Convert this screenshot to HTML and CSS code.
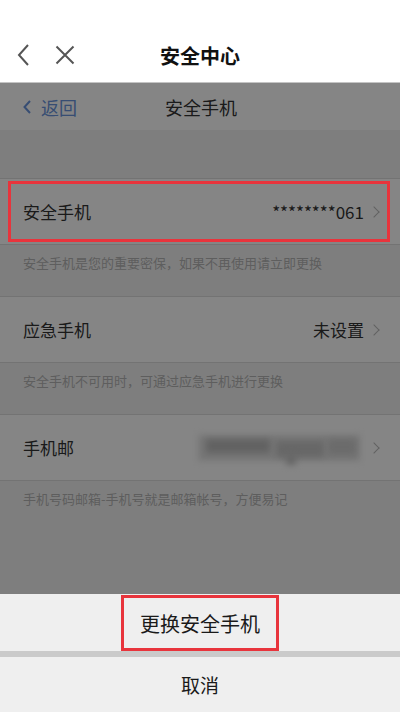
FILE: index.html
```html
<!DOCTYPE html>
<html>
<head>
  <meta charset="utf-8">
  <link rel="stylesheet" href="styles.css">
</head>
<body>
  <div class="app">
    <!-- Top app bar -->
    <div class="app-bar">
      <div class="app-bar-icons">
        <svg class="icon-back" width="16" height="24" viewBox="0 0 16 24">
          <path d="M12 2 L3 12 L12 22" fill="none" stroke="#555" stroke-width="2"/>
        </svg>
        <svg class="icon-close" width="20" height="20" viewBox="0 0 20 20">
          <path d="M1.5 1.5 L18.5 18.5 M18.5 1.5 L1.5 18.5" fill="none" stroke="#555" stroke-width="2"/>
        </svg>
      </div>
      <div class="app-bar-title">安全中心</div>
    </div>

    <!-- Web page, dimmed by the sheet -->
    <div class="webview">
      <div class="page-nav">
        <span class="nav-back">
          <svg width="8" height="14" viewBox="0 0 8 14">
            <path d="M7 1 L1.5 7 L7 13" fill="none" stroke="#6a95dc" stroke-width="2"/>
          </svg>
          返回
        </span>
        <span class="nav-title">安全手机</span>
      </div>

      <div class="settings">
        <div class="row row-marked">
          <span class="row-label">安全手机</span>
          <span class="row-value">********061<i class="chevron"></i></span>
        </div>
        <div class="hint">安全手机是您的重要密保，如果不再使用请立即更换</div>

        <div class="row">
          <span class="row-label">应急手机</span>
          <span class="row-value">未设置<i class="chevron"></i></span>
        </div>
        <div class="hint">安全手机不可用时，可通过应急手机进行更换</div>

        <div class="row">
          <span class="row-label">手机邮</span>
          <span class="row-value">
            <span class="blurred">
              <b class="b1"></b><b class="b2"></b><b class="b3"></b><b class="b4"></b><b class="b5"></b>
            </span><i class="chevron"></i>
          </span>
        </div>
        <div class="hint">手机号码邮箱-手机号就是邮箱帐号，方便易记</div>
      </div>

      <div class="dim"></div>
    </div>

    <!-- Action sheet -->
    <div class="sheet">
      <div class="sheet-action"><span class="marked">更换安全手机</span></div>
      <div class="sheet-gap"></div>
      <div class="sheet-cancel">取消</div>
    </div>
  </div>
</body>
</html>
```

FILE: styles.css
```css
body {
  margin: 0;
  padding: 0;
  font-family: "Noto Sans CJK SC", "Noto Sans", sans-serif;
  background: #fff;
}

.app {
  width: 400px;
  height: 712px;
  display: flex;
  flex-direction: column;
  overflow: hidden;
}

/* app bar */
.app-bar {
  height: 54px;
  padding-top: 28px;
  border-bottom: 1px solid #c4c4c4;
  background: #fff;
  display: flex;
  align-items: center;
}

.app-bar-icons {
  width: 120px;
  display: flex;
  align-items: center;
  padding-left: 16px;
  gap: 23px;
  box-sizing: border-box;
}

.app-bar-title {
  width: 160px;
  text-align: center;
  font-size: 20px;
  font-weight: 700;
  color: #111;
}

/* dimmed web page */
.webview {
  flex: 1;
  position: relative;
  background: #f2f2f2;
}

.dim {
  position: absolute;
  top: 0;
  left: 0;
  right: 0;
  bottom: 0;
  background: rgba(0, 0, 0, 0.48);
  z-index: 1;
}

.page-nav {
  height: 47px;
  background: #fff;
  display: flex;
  align-items: center;
  padding-left: 23px;
}

.nav-back {
  width: 142px;
  color: #6a95dc;
  font-size: 18px;
  display: flex;
  align-items: center;
  gap: 10px;
}

.nav-title {
  font-size: 18px;
  color: #333;
}

.settings {
  margin-top: 48px;
}

.row {
  height: 65px;
  background: #fff;
  border-top: 1px solid #dcdcdc;
  border-bottom: 1px solid #dcdcdc;
  display: flex;
  align-items: center;
  justify-content: space-between;
  padding: 0 22px 0 23px;
  font-size: 17px;
  color: #333;
}

.row-marked {
  position: relative;
}

.row-marked::after {
  content: "";
  position: absolute;
  top: 2px;
  bottom: 2px;
  left: 8px;
  right: 10px;
  border: 3px solid #e8343c;
  z-index: 2;
}

.row-value {
  display: flex;
  align-items: center;
}

.chevron {
  display: inline-block;
  width: 7px;
  height: 7px;
  border-top: 1.5px solid #bbb;
  border-right: 1.5px solid #bbb;
  transform: rotate(45deg);
  margin-left: 6px;
}

.blurred {
  position: relative;
  width: 166px;
  height: 34px;
  display: block;
}

.blurred b {
  position: absolute;
  filter: blur(3px);
}

.blurred .b1 {
  left: 0;
  top: 4px;
  width: 162px;
  height: 26px;
  background: #e2e2e2;
}

.blurred .b2 {
  left: 8px;
  top: 8px;
  width: 64px;
  height: 14px;
  background: #bcbcbc;
}

.blurred .b3 {
  left: 78px;
  top: 10px;
  width: 48px;
  height: 16px;
  background: #c6c6c6;
}

.blurred .b4 {
  left: 130px;
  top: 8px;
  width: 28px;
  height: 16px;
  background: #cecece;
}

.blurred .b5 {
  left: 88px;
  top: 22px;
  width: 10px;
  height: 12px;
  background: #c6c6c6;
}

.hint {
  height: 51px;
  padding: 8px 0 0 23px;
  box-sizing: border-box;
  font-size: 13px;
  color: #b4b4b4;
}

/* action sheet */
.sheet {
  background: #efefef;
}

.sheet-action {
  height: 57px;
  display: flex;
  justify-content: center;
  align-items: flex-start;
}

.marked {
  height: 56px;
  padding: 0 16px;
  margin-top: 1px;
  border: 3px solid #e8343c;
  box-sizing: border-box;
  display: flex;
  align-items: center;
  font-size: 20px;
  color: #1a1a1a;
}

.sheet-gap {
  height: 6px;
  background: #cacaca;
}

.sheet-cancel {
  height: 55px;
  display: flex;
  justify-content: center;
  align-items: center;
  font-size: 19px;
  color: #1a1a1a;
}
```
